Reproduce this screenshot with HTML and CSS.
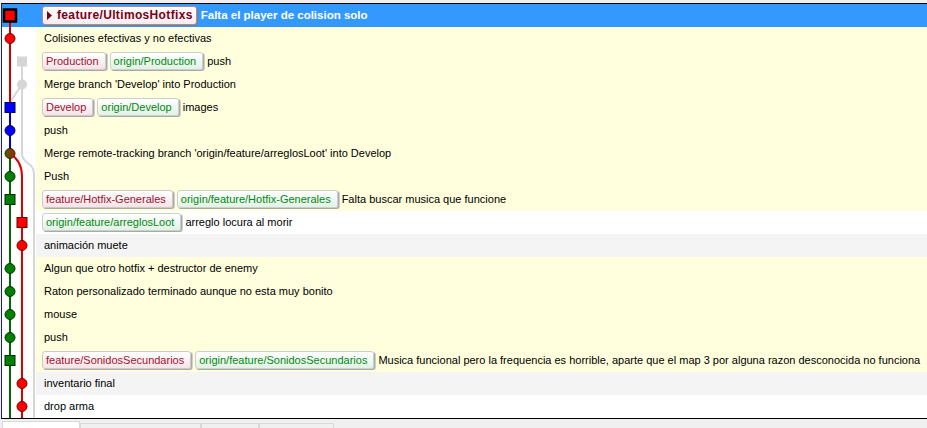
FILE: index.html
```html
<!DOCTYPE html>
<html lang="es">
<head>
<meta charset="utf-8">
<title>Commits</title>
<link rel="stylesheet" href="styles.css">
</head>
<body>
<div class="list">
  <svg class="graph" width="34" height="414" viewBox="0 0 34 414">
    <defs>
      <linearGradient id="mix" x1="0" y1="0" x2="1" y2="0">
        <stop offset="0" stop-color="#3a6a00"/>
        <stop offset="1" stop-color="#b02000"/>
      </linearGradient>
    </defs>
    <g fill="none" stroke-width="2">
      <path d="M20 80.5 L9.5 96 L8 99" stroke="#d6d6d6"/>
      <path d="M20 57.5 V150 C20 160 32 158 32 170 V414" stroke="#d6d6d6"/>
      <path d="M8 11.5 V103.5" stroke="#cc0000"/>
      <path d="M8 103.5 V149.5" stroke="#0000cc"/>
      <path d="M8 149.5 V414" stroke="#006a00"/>
      <path d="M8 149.5 C15 154 20 160 20 172 V414" stroke="#dd0000"/>
    </g>
    <rect x="2" y="5.5" width="12" height="12" fill="#ff0000" stroke="#000" stroke-width="2.5"/>
    <circle cx="8" cy="34.5" r="5" fill="#ff0000" stroke="#700000"/>
    <rect x="15" y="52.5" width="10" height="10" fill="#d6d6d6"/>
    <circle cx="20" cy="80.5" r="5" fill="#d6d6d6"/>
    <rect x="3" y="98.5" width="10" height="10" fill="#0000ff" stroke="#000050"/>
    <circle cx="8" cy="126.5" r="5" fill="#0000ff" stroke="#000050"/>
    <circle cx="8" cy="149.5" r="5" fill="url(#mix)" stroke="#302000"/>
    <circle cx="8" cy="172.5" r="5" fill="#008000" stroke="#003000"/>
    <rect x="3" y="190.5" width="10" height="10" fill="#008000" stroke="#003000"/>
    <rect x="15" y="213.5" width="10" height="10" fill="#ff0000" stroke="#700000"/>
    <circle cx="20" cy="241.5" r="5" fill="#ff0000" stroke="#700000"/>
    <circle cx="8" cy="264.5" r="5" fill="#008000" stroke="#003000"/>
    <circle cx="8" cy="287.5" r="5" fill="#008000" stroke="#003000"/>
    <circle cx="8" cy="310.5" r="5" fill="#008000" stroke="#003000"/>
    <circle cx="8" cy="333.5" r="5" fill="#008000" stroke="#003000"/>
    <rect x="3" y="351.5" width="10" height="10" fill="#008000" stroke="#003000"/>
    <circle cx="20" cy="379.5" r="5" fill="#ff0000" stroke="#700000"/>
    <circle cx="20" cy="402.5" r="5" fill="#ff0000" stroke="#700000"/>
  </svg>

  <div class="row sel">
    <div class="g"></div>
    <div class="t"><span class="tag head"><svg class="tri" width="5" height="9" viewBox="0 0 5 9"><path d="M0 0 L5 4.5 L0 9 Z" fill="#7a0018"/></svg>feature/UltimosHotfixs</span><span class="msg">Falta el player de colision solo</span></div>
  </div>
  <div class="row cur"><div class="g"></div><div class="t"><span class="msg plain">Colisiones efectivas y no efectivas</span></div></div>
  <div class="row cur"><div class="g"></div><div class="t"><span class="tag">Production</span><span class="tag remote">origin/Production</span><span class="msg">push</span></div></div>
  <div class="row cur"><div class="g"></div><div class="t"><span class="msg plain">Merge branch 'Develop' into Production</span></div></div>
  <div class="row cur"><div class="g"></div><div class="t"><span class="tag">Develop</span><span class="tag remote">origin/Develop</span><span class="msg">images</span></div></div>
  <div class="row cur"><div class="g"></div><div class="t"><span class="msg plain">push</span></div></div>
  <div class="row cur"><div class="g"></div><div class="t"><span class="msg plain">Merge remote-tracking branch 'origin/feature/arreglosLoot' into Develop</span></div></div>
  <div class="row cur"><div class="g"></div><div class="t"><span class="msg plain">Push</span></div></div>
  <div class="row cur"><div class="g"></div><div class="t"><span class="tag">feature/Hotfix-Generales</span><span class="tag remote">origin/feature/Hotfix-Generales</span><span class="msg">Falta buscar musica que funcione</span></div></div>
  <div class="row white"><div class="g"></div><div class="t"><span class="tag remote">origin/feature/arreglosLoot</span><span class="msg">arreglo locura al morir</span></div></div>
  <div class="row grey"><div class="g"></div><div class="t"><span class="msg plain">animación muete</span></div></div>
  <div class="row cur"><div class="g"></div><div class="t"><span class="msg plain">Algun que otro hotfix + destructor de enemy</span></div></div>
  <div class="row cur"><div class="g"></div><div class="t"><span class="msg plain">Raton personalizado terminado aunque no esta muy bonito</span></div></div>
  <div class="row cur"><div class="g"></div><div class="t"><span class="msg plain">mouse</span></div></div>
  <div class="row cur"><div class="g"></div><div class="t"><span class="msg plain">push</span></div></div>
  <div class="row cur"><div class="g"></div><div class="t"><span class="tag">feature/SonidosSecundarios</span><span class="tag remote">origin/feature/SonidosSecundarios</span><span class="msg">Musica funcional pero la frequencia es horrible, aparte que el map 3 por alguna razon desconocida no funciona</span></div></div>
  <div class="row grey"><div class="g"></div><div class="t"><span class="msg plain">inventario final</span></div></div>
  <div class="row white"><div class="g"></div><div class="t"><span class="msg plain">drop arma</span></div></div>
</div>
<div class="tabs">
  <div class="tab first"></div>
  <div class="tab w120"></div>
  <div class="tab w58"></div>
  <div class="tab w75"></div>
</div>
</body>
</html>
```

FILE: styles.css
```css
html, body {
  margin: 0;
  padding: 0;
}
body {
  width: 927px;
  height: 428px;
  overflow: hidden;
  background: #f0f0f0;
  font-family: "Liberation Sans", Arial, sans-serif;
  font-size: 11px;
  color: #000;
}
.list {
  position: relative;
  margin: 3px 0 0 1px;
  border-top: 1px solid #000;
  border-left: 1px solid #1a2a44;
  border-bottom: 1px solid #000;
  background: #fff;
}
.graph {
  position: absolute;
  left: 0;
  top: 0;
  display: block;
}
.row {
  display: flex;
  height: 23px;
}
.g {
  width: 34px;
  flex: none;
  background: #fff;
}
.t {
  flex: 1;
  display: flex;
  align-items: center;
  box-sizing: border-box;
  padding: 0 0 1px 6px;
  white-space: nowrap;
  overflow: hidden;
}
.row.sel .g,
.row.sel .t {
  background: #3399ff;
}
.row.cur .t { background: #ffffdd; }
.row.white .t { background: #ffffff; }
.row.grey .t { background: #f4f4f4; }

.msg.plain { padding-left: 2px; }

.tag {
  display: inline-flex;
  align-items: center;
  box-sizing: border-box;
  height: 18px;
  padding: 0 6px 0 3px;
  margin-right: 4px;
  border: 1px solid #d3c6c8;
  border-radius: 3px;
  box-shadow: 1px 1px 0 #a9a9a9, 2px 1px 0 #d0d0d0;
  background: linear-gradient(#ffffff, #f3e4e7);
  color: #a3102e;
}
.tag.remote {
  border-color: #c6d3c8;
  background: linear-gradient(#ffffff, #e4f1e6);
  color: #008a10;
}
.tag.head {
  height: 19px;
  padding: 0 3px 0 4px;
  margin-right: 4px;
  font-weight: bold;
  font-size: 12px;
  letter-spacing: 0.35px;
  color: #7a0018;
  border-color: #b08a90;
  box-shadow: 1px 1px 0 #6a80a0;
  background: linear-gradient(#ffffff, #f6ecee);
}
.tri {
  margin-right: 5px;
  flex: none;
}
.row.sel .msg {
  font-weight: bold;
  font-size: 11.5px;
  color: #fff;
}

.tabs {
  display: flex;
  align-items: flex-end;
  height: 9px;
  padding-left: 2px;
}
.tab {
  height: 5px;
  border: 1px solid #d9d9d9;
  border-bottom: none;
  box-sizing: border-box;
}
.tab.first {
  width: 78px;
  height: 7px;
  background: #fff;
}
.tab.w120 { width: 121px; }
.tab.w58 { width: 58px; }
.tab.w75 { width: 75px; }
```
